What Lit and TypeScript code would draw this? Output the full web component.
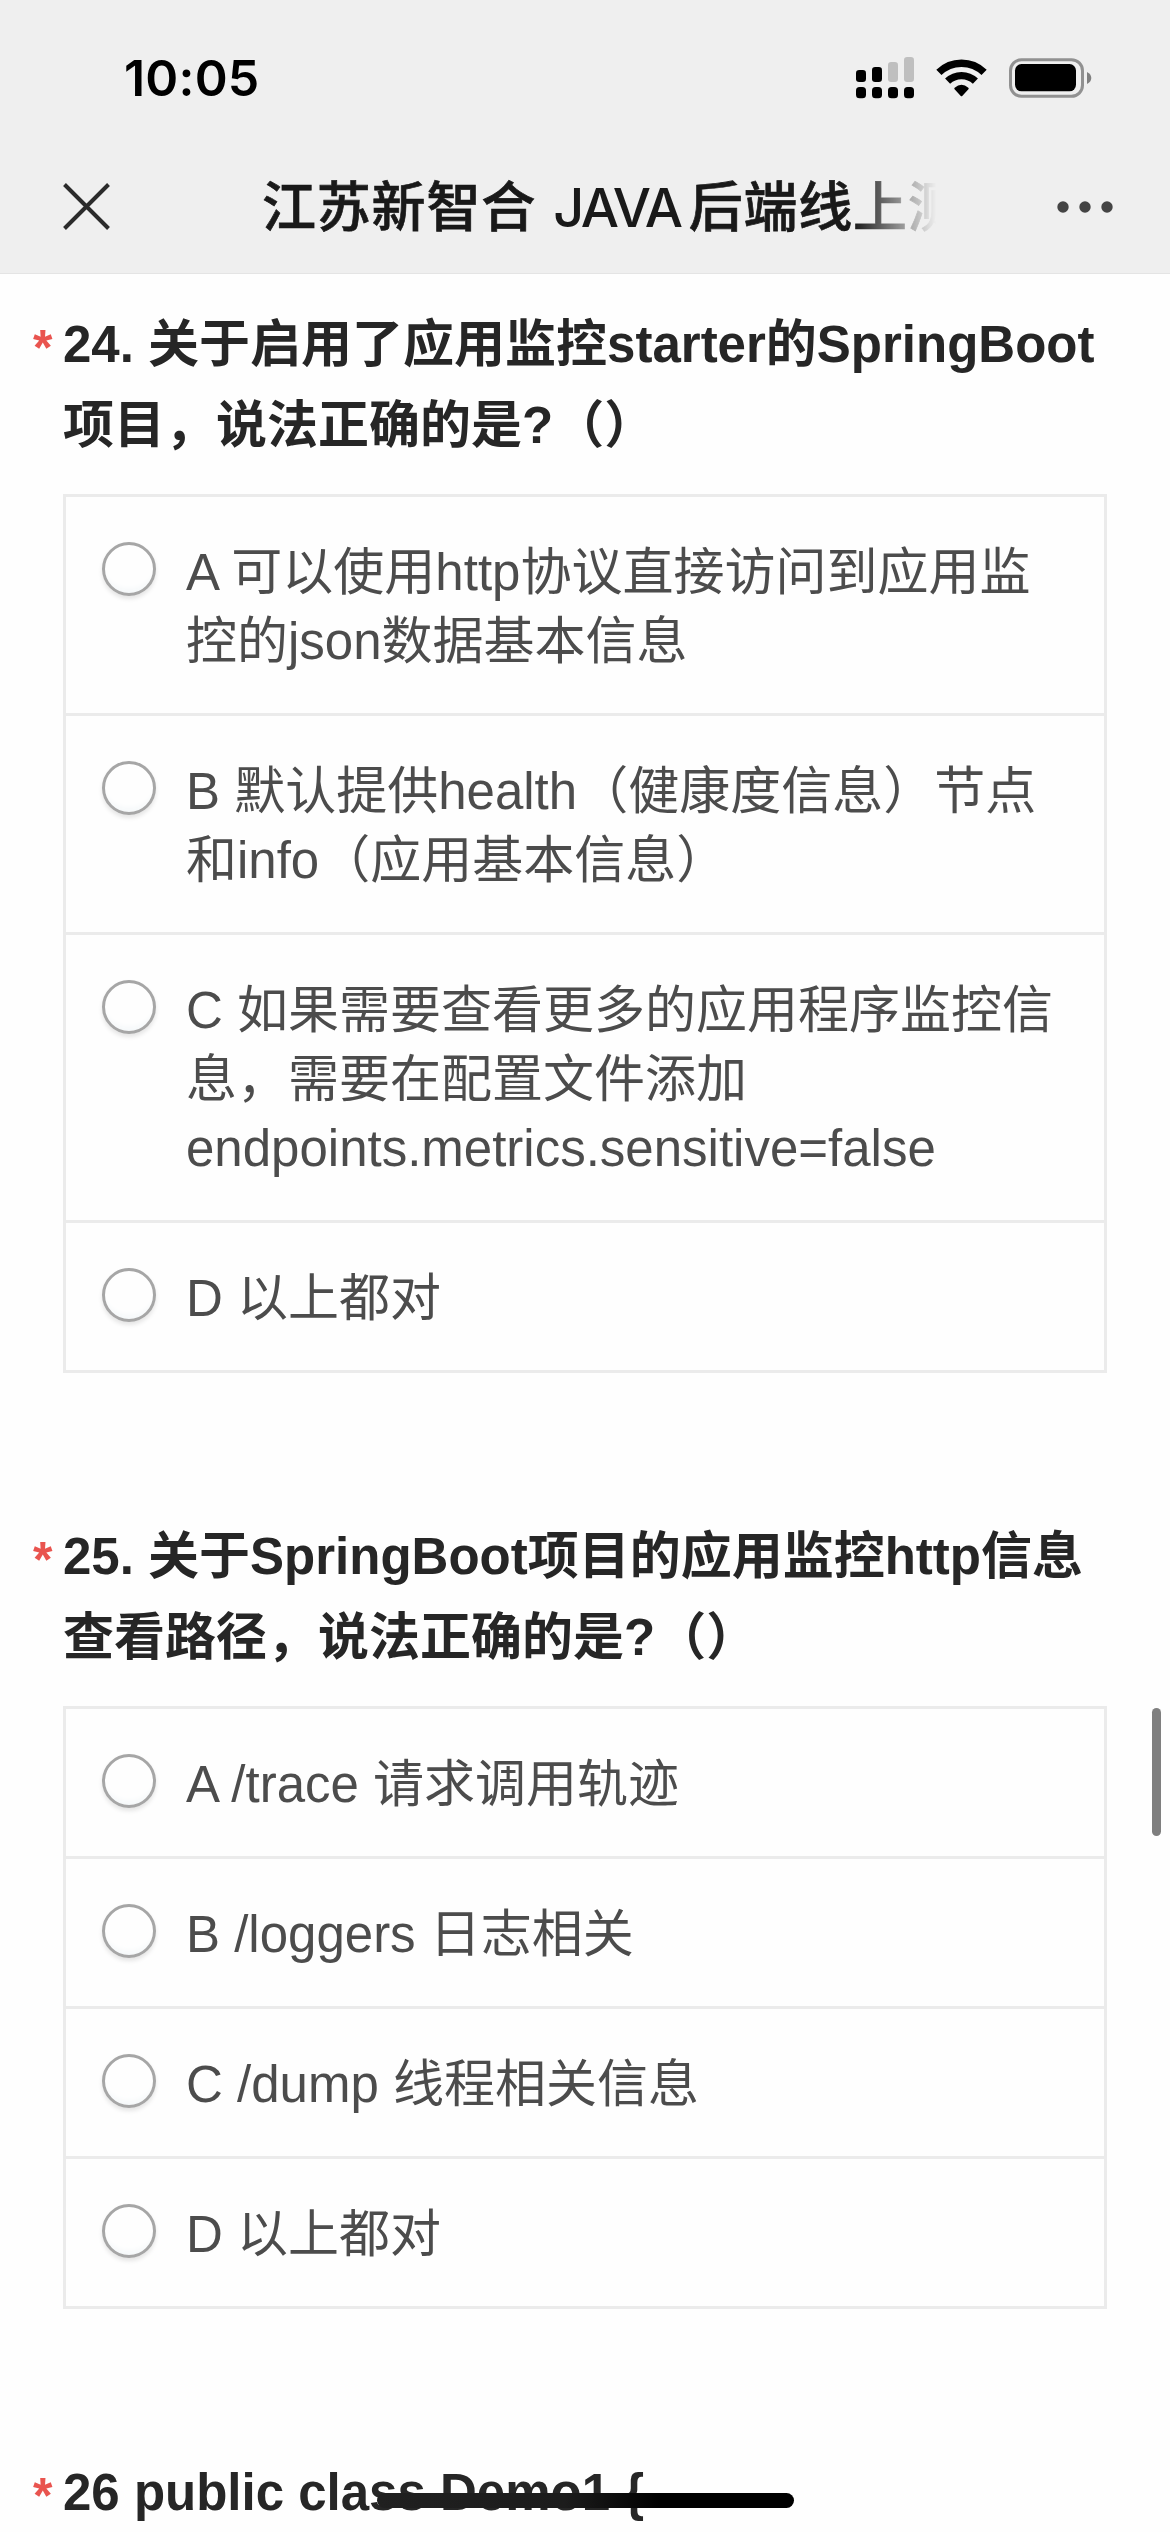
import { LitElement, html, css, svg } from "lit";
import { customElement, property } from "lit/decorators.js";

interface Question {
  title: string[];
  options: string[][];
}

const QUESTIONS: Question[] = [
  {
    title: ["24. 关于启用了应用监控starter的SpringBoot", "项目，说法正确的是?（）"],
    options: [
      ["A 可以使用http协议直接访问到应用监", "控的json数据基本信息"],
      ["B 默认提供health（健康度信息）节点", "和info（应用基本信息）"],
      ["C 如果需要查看更多的应用程序监控信", "息，需要在配置文件添加", "endpoints.metrics.sensitive=false"],
      ["D 以上都对"],
    ],
  },
  {
    title: ["25. 关于SpringBoot项目的应用监控http信息", "查看路径，说法正确的是?（）"],
    options: [["A /trace 请求调用轨迹"], ["B /loggers 日志相关"], ["C /dump 线程相关信息"], ["D 以上都对"]],
  },
  { title: ["26 public class Demo1 {"], options: [] },
];

const BARS = [
  { x: 0, y: 13, h: 12, on: true },
  { x: 16, y: 10, h: 15, on: true },
  { x: 32, y: 5, h: 20, on: false },
  { x: 48, y: 0, h: 25, on: false },
];

@customElement("status-bar")
export class StatusBar extends LitElement {
  static styles = css`
    :host {
      display: flex;
      justify-content: space-between;
      align-items: flex-start;
      height: 150px;
      padding: 0 78px 0 124px;
      box-sizing: border-box;
      color: #000;
    }
    .time {
      margin-top: 48px;
      font: 600 50px/60px Inter, "Liberation Sans", sans-serif;
      letter-spacing: 0.2px;
    }
    .icons {
      display: flex;
      padding-top: 57px;
    }
    .signal {
      width: 58px;
      height: 42px;
      margin-right: 22px;
    }
    .wifi {
      width: 52px;
      height: 42px;
      margin-right: 21px;
    }
    .battery {
      width: 83px;
      height: 42px;
    }
  `;

  render() {
    return html`
      <div class="time">10:05</div>
      <div class="icons">
        <svg class="signal" viewBox="0 0 58 42">
          ${BARS.map(
            (b) => svg`
              <rect x=${b.x} y=${b.y} width="10" height=${b.h} rx="3.2" fill=${b.on ? "#000" : "#bfbfbf"} />
              <rect x=${b.x} y="30" width="10" height="11.3" rx="3.6" fill="#000" />`
          )}
        </svg>
        <svg class="wifi" viewBox="0 0 52 42" fill="none" stroke="#000">
          <path d="M2.9 15.4A32.4 32.4 0 0 1 48.1 15.4" stroke-width="7.4" />
          <path d="M11.6 24.2A19.9 19.9 0 0 1 39.4 24.2" stroke-width="7.2" />
          <path d="M25.5 38.2L19.3 31.6Q25.5 26.2 31.7 31.6Z" fill="#000" stroke-width="2" stroke-linejoin="round" />
        </svg>
        <svg class="battery" viewBox="0 0 83 42">
          <rect x="1.5" y="2.7" width="72" height="36.6" rx="11" fill="none" stroke="#919191" stroke-width="3" />
          <rect x="6" y="7" width="61" height="27.3" rx="6.5" fill="#000" />
          <path d="M78 15Q82.3 17.2 82.3 21T78 27Z" fill="#808080" />
        </svg>
      </div>
    `;
  }
}

@customElement("nav-bar")
export class NavBar extends LitElement {
  static styles = css`
    :host {
      display: flex;
      align-items: center;
      height: 124px;
      padding: 0 57px 10px 63px;
      box-sizing: border-box;
      border-bottom: 1px solid #e4e4e4;
    }
    .close {
      width: 47px;
      height: 47px;
    }
    .title {
      width: 674px;
      margin: 2px 0 0 152px;
      overflow: hidden;
      white-space: nowrap;
      color: #191919;
      font: 500 54px/80px Inter, "Noto Sans CJK SC", sans-serif;
      letter-spacing: 0.8px;
      -webkit-text-stroke: 0.7px #191919;
      -webkit-mask-image: linear-gradient(90deg, #000 592px, transparent 674px);
      mask-image: linear-gradient(90deg, #000 592px, transparent 674px);
    }
    .latin {
      margin: 0 8px 0 2px;
      letter-spacing: -2.4px;
      -webkit-text-stroke: 0;
    }
    .more {
      width: 56px;
      height: 12px;
      margin-left: auto;
    }
  `;

  render() {
    return html`
      <svg class="close" viewBox="0 0 47 47">
        <path d="M1.5 1.5L45.5 45.5M45.5 1.5L1.5 45.5" stroke="#2b2b2b" stroke-width="4" fill="none" />
      </svg>
      <div class="title">江苏新智合 <span class="latin">JAVA</span>后端线上测</div>
      <svg class="more" viewBox="0 0 56 12" fill="#444">
        <circle cx="6" cy="6" r="5.7" />
        <circle cx="28" cy="6" r="5.7" />
        <circle cx="50" cy="6" r="5.7" />
      </svg>
    `;
  }
}

@customElement("quiz-question")
export class QuizQuestion extends LitElement {
  @property({ attribute: false }) question!: Question;

  static styles = css`
    :host {
      display: block;
      padding: 0 63px;
      font-family: "Liberation Sans", "Noto Sans CJK SC", sans-serif;
      font-size: 51px;
    }
    .line {
      white-space: nowrap;
    }
    .heading {
      position: relative;
      line-height: 81px;
      font-weight: 700;
      color: #262626;
    }
    .star {
      position: absolute;
      left: -30px;
      top: 4px;
      font-size: 50px;
      font-weight: 700;
      color: #e9544f;
    }
    .options {
      margin-top: 28px;
      border: 3px solid #ebebeb;
      border-bottom: 0;
      color: #4c4c4c;
    }
    .option {
      display: flex;
      align-items: flex-start;
      padding: 41px 0 37px 36px;
      border-bottom: 3px solid #ebebeb;
      line-height: 69px;
    }
    .radio {
      flex: none;
      width: 54px;
      height: 54px;
      margin: 4px 30px 0 0;
      box-sizing: border-box;
      border: 3px solid #a6a6a6;
      border-radius: 50%;
      box-shadow: 0 3px 4px rgba(0, 0, 0, 0.1), inset 0 -9px 6px -6px #f3f7f9;
    }
  `;

  render() {
    const { title, options } = this.question;
    return html`
      <div class="heading"><span class="star">*</span>${title.map((l) => html`<div class="line">${l}</div>`)}</div>
      ${options.length
        ? html`<div class="options">
            ${options.map(
              (lines) => html`<div class="option">
                <span class="radio"></span>
                <div>${lines.map((l) => html`<div class="line">${l}</div>`)}</div>
              </div>`
            )}
          </div>`
        : null}
    `;
  }
}

@customElement("app-root")
export class AppRoot extends LitElement {
  static styles = css`
    :host {
      display: block;
      position: relative;
      width: 1170px;
      height: 2532px;
      overflow: hidden;
      background: #fefefe;
    }
    .top {
      background: #efefef;
    }
    .page {
      display: flex;
      flex-direction: column;
      gap: 143px;
      padding-top: 30px;
    }
    .scroll {
      position: absolute;
      right: 9px;
      top: 1708px;
      width: 9px;
      height: 128px;
      border-radius: 5px;
      background: #7f7f7f;
    }
    .home {
      position: absolute;
      left: 377px;
      bottom: 24px;
      width: 417px;
      height: 15px;
      border-radius: 8px;
      background: linear-gradient(90deg, #202020 0%, #1c1c1c 45%, #000 68%);
    }
  `;

  render() {
    return html`
      <div class="top"><status-bar></status-bar><nav-bar></nav-bar></div>
      <div class="page">${QUESTIONS.map((q) => html`<quiz-question .question=${q}></quiz-question>`)}</div>
      <div class="scroll"></div>
      <div class="home"></div>
    `;
  }
}
